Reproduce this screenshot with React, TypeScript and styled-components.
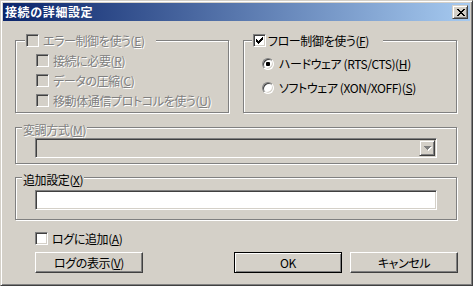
import styled, { createGlobalStyle } from 'styled-components';

const GlobalStyle = createGlobalStyle`
  html, body {
    margin: 0;
    padding: 0;
  }

  body {
    background: #d4d0c8;
    font-family: "Noto Sans CJK JP", "Noto Sans", sans-serif;
    font-size: 12px;
    font-feature-settings: "palt";
    color: #000;
  }
`;

// tiny bitmap glyphs, one string per pixel row
const CLOSE_X = ['xx....xx', '.xx..xx.', '..xxxx..', '...xx...', '..xxxx..', '.xx..xx.', 'xx....xx'];
const CHECK = ['......x', '.....xx', 'x...xxx', 'xx.xxx.', 'xxxxx..', '.xxx...', '..x....'];
const ARROW = ['xxxxxxx', '.xxxxx.', '..xxx..', '...x...'];

const PixelGlyph = ({rows, color, shadow}: { rows: string[]; color: string; shadow?: string }) => {
    const w = rows[0].length + (shadow ? 1 : 0);
    const h = rows.length + (shadow ? 1 : 0);
    const cells = rows.flatMap((row, y) =>
        row.split('').map((c, x) => (c === 'x' ? [x, y] : null)).filter(Boolean) as number[][]);

    return (
        <svg width={w} height={h} viewBox={`0 0 ${w} ${h}`} shapeRendering="crispEdges" style={{display: 'block'}}>
            {shadow && cells.map(([x, y]) => <rect key={`s${x}-${y}`} x={x + 1} y={y + 1} width={1} height={1} fill={shadow}/>)}
            {cells.map(([x, y]) => <rect key={`${x}-${y}`} x={x} y={y} width={1} height={1} fill={color}/>)}
        </svg>
    );
};

const Window = styled.div`
  box-sizing: border-box;
  width: 473px;
  height: 286px;
  padding: 2px;
  display: flex;
  flex-direction: column;
  background: #d4d0c8;
  border: 1px solid;
  border-color: #d4d0c8 #404040 #404040 #d4d0c8;
  box-shadow: inset 1px 1px #fff, inset -1px -1px #808080;
`;

const TitleBar = styled.div`
  height: 18px;
  flex: none;
  display: flex;
  align-items: center;
  padding: 0 2px;
  background: linear-gradient(to right, #0a246a, #a6caf0);
`;

const Title = styled.span`
  color: #fff;
  font-weight: bold;
  font-size: 12px;
  line-height: 14px;
  letter-spacing: 0.6px;
  font-feature-settings: normal;
`;

const CaptionButton = styled.button`
  box-sizing: border-box;
  margin: 0 0 0 auto;
  padding: 0 0 0 1px;
  width: 16px;
  height: 14px;
  display: flex;
  align-items: center;
  justify-content: center;
  background: #d4d0c8;
  border: 1px solid;
  border-color: #d4d0c8 #404040 #404040 #d4d0c8;
  box-shadow: inset 1px 1px #fff, inset -1px -1px #808080;
`;

const Body = styled.div`
  display: flex;
  flex-direction: column;
  padding: 13px 13px 0 12px;
`;

const GroupRow = styled.div`
  display: flex;
  gap: 14px;
`;

const GroupBox = styled.fieldset<{ $top?: number }>`
  flex: 1;
  min-width: 0;
  margin: ${p => p.$top ?? 0}px 0 0;
  padding: 0;
  border: 1px solid #808080;
  box-shadow: inset 1px 1px #fff, 1px 1px #fff;
`;

const Legend = styled.legend<{ $inset: number; $width?: number }>`
  box-sizing: border-box;
  margin-left: ${p => p.$inset}px;
  padding: 0 1px;
  height: 13px;
  width: ${p => (p.$width ? `${p.$width}px` : 'auto')};
  background: #d4d0c8;
`;

const LegendInner = styled.span<{ $gap?: number }>`
  display: flex;
  align-items: center;
  gap: ${p => p.$gap ?? 4}px;
  height: 13px;
`;

const Caption = styled.span<{ $disabled?: boolean }>`
  white-space: nowrap;
  line-height: 13px;
  letter-spacing: -0.4px;
  color: ${p => (p.$disabled ? '#808080' : '#000')};
  text-shadow: ${p => (p.$disabled ? '1px 1px 0 #fff' : 'none')};
`;

const OptionList = styled.div<{ $pad: string; $gap: number }>`
  display: flex;
  flex-direction: column;
  gap: ${p => p.$gap}px;
  padding: ${p => p.$pad};
`;

const OptionRow = styled.label<{ $gap?: number }>`
  display: flex;
  align-items: center;
  gap: ${p => p.$gap ?? 4}px;
  height: 13px;
`;

const CheckBox = styled.span<{ $disabled?: boolean }>`
  box-sizing: border-box;
  flex: none;
  width: 13px;
  height: 13px;
  display: flex;
  align-items: center;
  justify-content: center;
  background: ${p => (p.$disabled ? '#d4d0c8' : '#fff')};
  border: 1px solid;
  border-color: #808080 #fff #fff #808080;
  box-shadow: inset 1px 1px #404040, inset -1px -1px #d4d0c8;
`;

const Radio = styled.span<{ $checked?: boolean }>`
  box-sizing: border-box;
  flex: none;
  width: 12px;
  height: 12px;
  border-radius: 50%;
  display: flex;
  align-items: center;
  justify-content: center;
  background: #fff;
  border: 1px solid;
  border-color: #808080 #fff #fff #808080;
  box-shadow: inset 1px 1px #404040, inset -1px -1px #d4d0c8;

  &::after {
    content: '';
    display: ${p => (p.$checked ? 'block' : 'none')};
    width: 4px;
    height: 4px;
    border-radius: 1px;
    background: #000;
  }
`;

const FieldWrap = styled.div<{ $pad: string }>`
  padding: ${p => p.$pad};
`;

const Sunken = styled.div<{ $disabled?: boolean }>`
  box-sizing: border-box;
  height: 20px;
  display: flex;
  justify-content: flex-end;
  padding: 2px;
  background: ${p => (p.$disabled ? '#d4d0c8' : '#fff')};
  border: 1px solid;
  border-color: #808080 #fff #fff #808080;
  box-shadow: inset 1px 1px #404040, inset -1px -1px #d4d0c8;
`;

const DropButton = styled.span`
  box-sizing: border-box;
  width: 16px;
  height: 16px;
  margin: -1px -1px 0 0;
  display: flex;
  align-items: center;
  justify-content: center;
  padding: 1px 0 0 1px;
  background: #d4d0c8;
  border: 1px solid;
  border-color: #d4d0c8 #404040 #404040 #d4d0c8;
  box-shadow: inset 1px 1px #fff, inset -1px -1px #808080;
`;

const LogCheck = styled(OptionRow)`
  margin-top: 12px;
  padding-left: 20px;
`;

const ButtonRow = styled.div`
  display: flex;
  gap: 8px;
  margin: 7px -1px 0 0;
  padding-left: 20px;
`;

const PushButton = styled.button<{ $default?: boolean }>`
  box-sizing: border-box;
  width: 108px;
  height: 21px;
  margin: 0;
  padding: 0;
  font: inherit;
  font-feature-settings: "palt";
  letter-spacing: -0.4px;
  line-height: 13px;
  color: #000;
  background: #d4d0c8;
  border: 1px solid;
  border-color: ${p => (p.$default ? '#000' : '#fff #404040 #404040 #fff')};
  box-shadow: ${p => (p.$default
          ? 'inset 1px 1px #fff, inset -1px -1px #808080'
          : 'inset -1px -1px #808080')};

  &:first-child {
    margin-right: auto;
  }
`;

export default function App() {
    return (
        <>
            <GlobalStyle/>
            <Window>
                <TitleBar>
                    <Title>接続の詳細設定</Title>
                    <CaptionButton aria-label="close">
                        <PixelGlyph rows={CLOSE_X} color="#000"/>
                    </CaptionButton>
                </TitleBar>

                <Body>
                    <GroupRow>
                        <GroupBox>
                            <Legend $inset={9} $width={131}>
                                <LegendInner>
                                    <CheckBox $disabled/>
                                    <Caption $disabled>エラー制御を使う(<u>E</u>)</Caption>
                                </LegendInner>
                            </Legend>
                            <OptionList $pad="7px 0 5px 20px" $gap={7}>
                                <OptionRow>
                                    <CheckBox $disabled/>
                                    <Caption $disabled>接続に必要(<u>R</u>)</Caption>
                                </OptionRow>
                                <OptionRow>
                                    <CheckBox $disabled/>
                                    <Caption $disabled>データの圧縮(<u>C</u>)</Caption>
                                </OptionRow>
                                <OptionRow>
                                    <CheckBox $disabled/>
                                    <Caption $disabled>移動体通信プロトコルを使う(<u>U</u>)</Caption>
                                </OptionRow>
                            </OptionList>
                        </GroupBox>

                        <GroupBox>
                            <Legend $inset={8} $width={131}>
                                <LegendInner $gap={2}>
                                    <CheckBox>
                                        <PixelGlyph rows={CHECK} color="#000"/>
                                    </CheckBox>
                                    <Caption>フロー制御を使う(<u>F</u>)</Caption>
                                </LegendInner>
                            </Legend>
                            <OptionList $pad="10px 0 0 18px" $gap={11}>
                                <OptionRow $gap={5}>
                                    <Radio $checked/>
                                    <Caption>ハードウェア (RTS/CTS)(<u>H</u>)</Caption>
                                </OptionRow>
                                <OptionRow $gap={5}>
                                    <Radio/>
                                    <Caption>ソフトウェア (XON/XOFF)(<u>S</u>)</Caption>
                                </OptionRow>
                            </OptionList>
                        </GroupBox>
                    </GroupRow>

                    <GroupBox $top={8}>
                        <Legend $inset={6}>
                            <Caption $disabled>変調方式(<u>M</u>)</Caption>
                        </Legend>
                        <FieldWrap $pad="4px 19px 5px">
                            <Sunken $disabled>
                                <DropButton>
                                    <PixelGlyph rows={ARROW} color="#808080" shadow="#fff"/>
                                </DropButton>
                            </Sunken>
                        </FieldWrap>
                    </GroupBox>

                    <GroupBox $top={7}>
                        <Legend $inset={6}>
                            <Caption>追加設定(<u>X</u>)</Caption>
                        </Legend>
                        <FieldWrap $pad="6px 19px 9px">
                            <Sunken/>
                        </FieldWrap>
                    </GroupBox>

                    <LogCheck>
                        <CheckBox/>
                        <Caption>ログに追加(<u>A</u>)</Caption>
                    </LogCheck>

                    <ButtonRow>
                        <PushButton>ログの表示(<u>V</u>)</PushButton>
                        <PushButton $default>OK</PushButton>
                        <PushButton>キャンセル</PushButton>
                    </ButtonRow>
                </Body>
            </Window>
        </>
    );
}
